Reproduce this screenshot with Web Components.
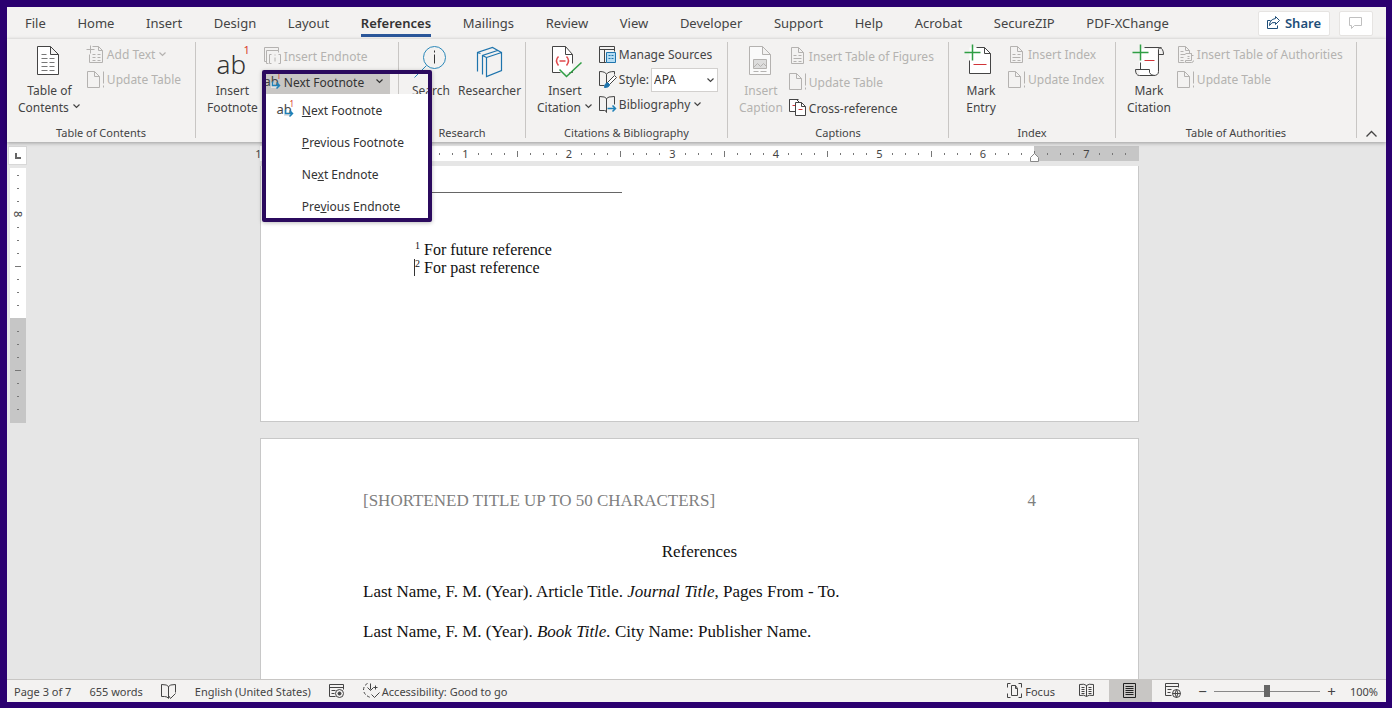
<!DOCTYPE html>
<html lang="en">
<head>
<meta charset="utf-8">
<meta name="viewport" content="width=device-width, initial-scale=1">
<title>Document - Word</title>
<style>
  body {
    margin: 0;
    background: #2b0070;
    color: #444;
    font: 12px/17px "Noto Sans", "Open Sans", sans-serif;
  }
</style>
</head>
<body>
<word-window>
  <tab-bar slot="tabs">
    <tab-link>File</tab-link>
    <tab-link>Home</tab-link>
    <tab-link>Insert</tab-link>
    <tab-link>Design</tab-link>
    <tab-link>Layout</tab-link>
    <tab-link active>References</tab-link>
    <tab-link>Mailings</tab-link>
    <tab-link>Review</tab-link>
    <tab-link>View</tab-link>
    <tab-link>Developer</tab-link>
    <tab-link>Support</tab-link>
    <tab-link>Help</tab-link>
    <tab-link>Acrobat</tab-link>
    <tab-link>SecureZIP</tab-link>
    <tab-link>PDF-XChange</tab-link>
  </tab-bar>

  <ribbon-bar slot="ribbon">
    <ribbon-group label="Table of Contents">
      <big-button icon="toc" menu>Table of<br>Contents</big-button>
      <command-list>
        <small-button icon="addText" disabled menu>Add Text</small-button>
        <small-button icon="update" disabled>Update Table</small-button>
      </command-list>
    </ribbon-group>
    <ribbon-group label="">
      <big-button icon="footnote">Insert<br>Footnote</big-button>
      <command-list roomy>
        <small-button icon="endnote" disabled>Insert Endnote</small-button>
        <footnote-menu>
          <menu-item icon="next"><u>N</u>ext Footnote</menu-item>
          <menu-item><u>P</u>revious Footnote</menu-item>
          <menu-item>Ne<u>x</u>t Endnote</menu-item>
          <menu-item>Pre<u>v</u>ious Endnote</menu-item>
        </footnote-menu>
      </command-list>
    </ribbon-group>
    <ribbon-group label="Research">
      <big-button icon="search">Search</big-button>
      <big-button icon="researcher">Researcher</big-button>
    </ribbon-group>
    <ribbon-group label="Citations &amp; Bibliography">
      <big-button icon="citation" menu>Insert<br>Citation</big-button>
      <command-list>
        <small-button icon="sources">Manage Sources</small-button>
        <style-picker></style-picker>
        <small-button icon="bibliography" menu>Bibliography</small-button>
      </command-list>
    </ribbon-group>
    <ribbon-group label="Captions">
      <big-button icon="caption" disabled>Insert<br>Caption</big-button>
      <command-list roomy>
        <small-button icon="lines" disabled>Insert Table of Figures</small-button>
        <small-button icon="update" disabled>Update Table</small-button>
        <small-button icon="crossRef">Cross-reference</small-button>
      </command-list>
    </ribbon-group>
    <ribbon-group label="Index">
      <big-button icon="markEntry">Mark<br>Entry</big-button>
      <command-list>
        <small-button icon="lines" disabled>Insert Index</small-button>
        <small-button icon="update" disabled>Update Index</small-button>
      </command-list>
    </ribbon-group>
    <ribbon-group label="Table of Authorities">
      <big-button icon="markCitation">Mark<br>Citation</big-button>
      <command-list>
        <small-button icon="authorities" disabled>Insert Table of Authorities</small-button>
        <small-button icon="update" disabled>Update Table</small-button>
      </command-list>
    </ribbon-group>
  </ribbon-bar>

  <doc-workspace slot="workspace">
    <footnote-page></footnote-page>
    <reference-page></reference-page>
  </doc-workspace>

  <status-bar slot="status"></status-bar>
</word-window>

<script>
const DOC = 'M1 1h13l8 8v20H1zM14 1v8h8';

// name: [width, height, svg markup]
const ICONS = {
  toc: [32, 32, `<g transform="translate(4 1)"><path fill="#fff" d="${DOC}"/><path d="M5 9h5M5 13h6M13 13h5M5 17h6M13 17h5M5 21h6M13 21h5M5 25h6M13 25h5" stroke="#777"/></g>`],
  addText: [18, 18, `<path d="M6 1h6l4 4v12H3v-8M12 1v4h4M0 4h8M4 0v8M6 9h3M11 9h3M6 12h3M11 12h3M6 15h3M11 15h3"/>`],
  update: [18, 18, `<path d="M1 1h7l5 5v11H1zM8 1v5h5M17 1v12M17 15v2"/>`],
  lines: [18, 18, `<path d="M3 1h7l5 5v11H3zM10 1v5h5M5 9h3M10 9h3M5 12h8M5 15h3M10 15h3"/>`],
  authorities: [18, 18, `<path d="M2 17V1h7l4 4v3M9 1v4h4M2 17h6M4 6h3M4 9h5M4 12h3M4 15h3M9 8h6v2h2M15 8v7H9v2h6q2 0 2-2M11 11h2M11 13h2"/>`],
  endnote: [18, 18, `<path d="M3 15H1V1h14v3M5 17H3V4h12v2M8 8H6v9h2M15 8h2v9h-2M11.500 11v4M11.500 8v1"/>`],
  footnote: [32, 32, `<text x="1" y="29" font-size="26" font-weight="300" fill="#333">ab</text><text x="28" y="9" font-size="11" fill="#d83b2b">1</text>`],
  next: [18, 18, `<text x="0" y="13" font-size="13" fill="#444">ab</text><text x="13" y="6" font-size="8" fill="#d83b2b">1</text><path stroke="#e4e3e2" stroke-width="3" d="M9 10v4h6"/><path stroke="#1e81b8" stroke-width="1.500" d="M9 9v4h7M13 10l3 3-3 3"/>`],
  search: [32, 32, `<g stroke="#2b88b9"><circle cx="20" cy="13" r="11"/><path d="M12 21L0 33"/></g><path d="M20 10v9M20 6v2" stroke="#333"/>`],
  researcher: [32, 32, `<path stroke="#1e74ad" stroke-width="1.200" d="M13 13l15-5v18l-15 6zM9 30V11l15-5M4 27V8l15-5 9 5M4 8l3 1M9 11l4 2"/>`],
  citation: [32, 32, `<path fill="#fff" stroke="none" d="M4 2h13l7 8v18H4z"/><path d="M12 28H4V2h13l7 8v9M17 2v8h7M24 26v2h-3"/><path stroke="#e0494c" stroke-width="1.500" d="M10 12q-4 4 0 9M18 12q4 4 0 9M11 16.500h6"/><path stroke="#2f9e44" stroke-width="1.500" d="M11 25l7 7L33 18"/>`],
  sources: [18, 18, `<path d="M8 17H1V1h15v5M1 4h15M6 4v13"/><path fill="#b5dcf3" stroke="#1e74ad" d="M8 7h9v10H8z"/><path stroke="#1e74ad" d="M10 10h2M13 10h2M10 13h2M13 13h2"/>`],
  style: [18, 18, `<path d="M8 4Q7 1 1 1v14h5M8 4Q9 1 16 1v3M8 4v9"/><path fill="#fff" d="M16 5l2 2-7 7-2-2z"/><path fill="#1e74ad" stroke="#1e74ad" d="M9 12q-3 1-3 5 5 0 5-3z"/>`],
  bibliography: [18, 18, `<path d="M8 3Q7 1 1 1v14h5q2 0 2 2M8 3Q9 1 16 1v8M8 3v14"/><path stroke="#1e81b8" stroke-width="1.500" d="M9 13h8M14 10l3 3-3 3"/>`],
  caption: [32, 32, `<g transform="translate(4 1)"><path fill="#fafafa" d="${DOC}"/><path fill="#ddd" d="M5 14h13v9H5zM5 22l4-4 3 3 3-3 3 3M5 26h5M12 26h6"/></g>`],
  crossRef: [18, 18, `<path fill="#fff" d="M7 13H1V1h7l3 3M10 1H1"/><path d="M4 7h3" stroke="#d13438"/><path fill="#fff" d="M7 4h6l4 4v9H7z"/><path d="M13 4v4h4"/><path stroke="#d13438" d="M10 11h4"/>`],
  markEntry: [32, 32, `<path fill="#fff" d="M5 16V3h15l6 6v20H5z" stroke="none"/><path d="M12 3h8l6 6v20H5V16M20 3v6h6"/><path stroke="#2f9e44" stroke-width="1.500" d="M0 8h16M8 0v16"/><path stroke="#d13438" d="M9 20h13"/>`],
  markCitation: [32, 32, `<path fill="#fff" stroke="none" d="M7 4h18v27H7z"/><path d="M12 3h15q4 1 4 7h-5V5q0-2 3-2M26 9v18q0 4-5 4H7q-4 0-4-6h14v3q1 3 5 3M8 18v7"/><path stroke="#2f9e44" stroke-width="1.500" d="M0 8h16M8 0v16"/><path stroke="#d13438" d="M12 16h10"/>`],
  share: [14, 14, `<path d="M4 5H1v8h10v-3M9 1l4 4-4 4V7Q5 6 3 10q0-6 6-7z"/>`],
  comment: [14, 14, `<path d="M1 2h12v8H6l-3 3v-3H1z"/>`],
  proof: [16, 16, `<path d="M8 4Q7 2 1 2v12h3q3 0 4 2M8 4Q9 2 15 2v8M8 4v12M8 13l2 3 5-5"/>`],
  macro: [16, 16, `<path d="M7 14H1V2h14v5M1 5h14M3 8h4M3 11h3"/><circle cx="11" cy="11" r="4"/><circle cx="11" cy="11" r="1.500" fill="currentColor"/>`],
  access: [17, 17, `<path d="M8 1v6M5 5l3 3 3-3M13 3v4M11 5h4M9 12l3 3 5-5"/><path stroke-dasharray="3 2" d="M5 1Q1 3 1 8q1 5 7 7"/>`],
  focus: [16, 16, `<path d="M4 1H1v4M12 1h3v4M4 15H1v-4M12 15h3v-4M5 3h4l2 3v7H5zM9 3v3h2"/>`],
  read: [16, 16, `<path d="M8 3Q6 1 1 2v11q5-1 7 1 2-2 7-1V2Q10 1 8 3v11M3 5h3M3 7h3M3 9h3M3 11h3M10 5h3M10 7h3M10 9h3M10 11h3"/>`],
  print: [14, 16, `<path d="M1 1h12v14H1zM3 4h8M3 6h8M3 8h8M3 10h8M3 12h8" stroke="#222"/>`],
  web: [17, 16, `<path d="M7 13H1V1h13v4M1 4h13M3 7h4M3 10h3"/><circle cx="12" cy="11" r="4"/><path d="M8 11h8M12 7q-3 4 0 8 3-4 0-8"/>`],
  chevron: [8, 6, `<path d="M1 1l3 3 3-3" stroke-width="1.200"/>`],
  collapse: [12, 8, `<path d="M1 7l5-5 5 5" stroke-width="1.300"/>`],
  indent: [10, 10, `<path fill="#fff" d="M1 9V5l4-4 4 4v4z" stroke="#888"/>`],
};

const icon = (name) => {
  const [w, h, body] = ICONS[name];
  return `<svg width="${w}" height="${h}" viewBox="0 0 ${w} ${h}" fill="none" stroke="currentColor" aria-hidden="true"><g transform="translate(-.5 -.5)">${body.replace(/<text/g, '<text stroke="none"')}</g></svg>`;
};

const RESET = `
  svg { flex: none; overflow: visible; }
  button { font: inherit; color: inherit; background: none; border: 0; padding: 0; margin: 0; }
`;

function define(name, render) {
  customElements.define(name, class extends HTMLElement {
    connectedCallback() {
      if (this.shadowRoot) return;
      this.attachShadow({ mode: 'open' }).innerHTML = `<style>${RESET}</style>` + render(this);
    }
  });
}

define('word-window', () => `
  <style>
    :host {
      display: flex;
      flex-direction: column;
      box-sizing: border-box;
      height: 100vh;
      padding: 7px 6px 6px 7px;
    }
    ::slotted([slot="workspace"]) { flex: 1; min-height: 0; }
  </style>
  <slot name="tabs"></slot>
  <slot name="ribbon"></slot>
  <slot name="workspace"></slot>
  <slot name="status"></slot>
`);

define('tab-bar', () => `
  <style>
    :host { display: flex; align-items: center; height: 32px; background: #f3f2f1; }
    nav { display: flex; flex: 1; justify-content: space-between; padding: 0 89px 0 18px; }
    .actions { display: flex; gap: 9px; padding-right: 13px; }
    button {
      display: flex;
      align-items: center;
      justify-content: center;
      gap: 4px;
      height: 25px;
      padding: 0 8px;
      background: #fff;
      border: 1px solid #e6e4e2;
      border-radius: 2px;
      color: #1f4e79;
      font-size: 13px;
      font-weight: 600;
    }
    .comment { padding: 0 9px; color: #c0c0c0; }
  </style>
  <nav><slot></slot></nav>
  <div class="actions">
    <button>${icon('share')}Share</button>
    <button class="comment" aria-label="Comments">${icon('comment')}</button>
  </div>
`);

define('tab-link', (el) => `
  <style>
    :host { display: block; font-size: 13px; line-height: 20px; }
    a {
      display: block;
      padding: 3px 0 1px;
      border-bottom: 3px solid transparent;
      color: #444;
      text-decoration: none;
      white-space: nowrap;
    }
    :host([active]) a { border-color: #2b579a; color: #333; font-weight: 600; }
  </style>
  <a href="#" ${el.hasAttribute('active') ? 'aria-current="page"' : ''}><slot></slot></a>
`);

define('ribbon-bar', () => `
  <style>
    :host {
      position: relative;
      z-index: 1;
      display: grid;
      grid-template-columns:
        minmax(0, 189fr) minmax(0, 203fr) minmax(0, 127fr) minmax(0, 202fr)
        minmax(0, 221fr) minmax(0, 167fr) minmax(0, 241fr) minmax(0, 29fr);
      height: 103px;
      background: #f3f2f1;
      box-shadow: 0 1px 4px #0005;
    }
    button { display: flex; justify-content: center; align-items: flex-end; padding-bottom: 4px; }
  </style>
  <slot></slot>
  <button aria-label="Collapse the ribbon">${icon('collapse')}</button>
`);

define('ribbon-group', (el) => `
  <style>
    :host {
      display: flex;
      flex-direction: column;
      box-sizing: border-box;
      margin: 3px 0 4px;
      border-right: 1px solid #c8c6c4;
    }
    .body { display: flex; flex: 1; gap: 6px; padding-left: 11px; }
    .label { font-size: 11px; line-height: 10px; text-align: center; }
  </style>
  <div class="body"><slot></slot></div>
  <div class="label">${el.getAttribute('label')}</div>
`);

define('big-button', (el) => `
  <style>
    :host { display: block; }
    button {
      display: flex;
      flex-direction: column;
      align-items: center;
      gap: 5px;
      min-width: 42px;
      padding-top: 3px;
      white-space: nowrap;
    }
    span svg { margin-left: 4px; vertical-align: 2px; }
    :host([disabled]) { color: #b4b2b0; }
  </style>
  <button ${el.hasAttribute('disabled') ? 'disabled' : ''}>
    ${icon(el.getAttribute('icon'))}
    <span><slot></slot>${el.hasAttribute('menu') ? icon('chevron') : ''}</span>
  </button>
`);

define('command-list', () => `
  <style>
    :host { display: grid; grid-auto-rows: 25px; align-content: start; }
    :host([roomy]) { grid-auto-rows: 26px; padding-top: 1px; }
  </style>
  <slot></slot>
`);

define('small-button', (el) => `
  <style>
    :host { display: flex; }
    button { display: flex; align-items: center; gap: 2px; white-space: nowrap; }
    .arrow { display: flex; margin-left: 2px; }
    :host([disabled]) { color: #b4b2b0; }
  </style>
  <button ${el.hasAttribute('disabled') ? 'disabled' : ''}>
    ${icon(el.getAttribute('icon'))}<slot></slot>
    ${el.hasAttribute('menu') ? `<span class="arrow">${icon('chevron')}</span>` : ''}
  </button>
`);

define('style-picker', () => `
  <style>
    :host { display: flex; align-items: center; gap: 2px; }
    .field { position: relative; display: flex; }
    select {
      appearance: none;
      width: 67px;
      height: 24px;
      padding: 0 2px;
      border: 1px solid #d2d0ce;
      border-radius: 0;
      background: #fff;
      color: #333;
      font: inherit;
    }
    .field svg { position: absolute; right: 3px; top: 10px; pointer-events: none; }
  </style>
  ${icon('style')}<label for="style">Style:</label>
  <span class="field">
    <select id="style"><option>APA</option></select>
    ${icon('chevron')}
  </span>
`);

// split button shown with its menu open
define('footnote-menu', () => `
  <style>
    :host { position: relative; display: block; color: #333; }
    .current {
      display: flex;
      align-items: center;
      gap: 2px;
      box-sizing: border-box;
      width: 126px;
      height: 24px;
      margin-top: 1px;
      background: #c8c6c4;
      white-space: nowrap;
    }
    .current > :last-child { margin-left: auto; margin-right: 6px; }
    .popup {
      position: absolute;
      top: 1px;
      left: -2px;
      padding-top: 20px;
      border: 4px solid #2b0a5e;
      border-radius: 2px;
      box-shadow: 0 1px 4px #0004;
      pointer-events: none;
    }
    .menu {
      display: grid;
      grid-auto-rows: 20px;
      gap: 12px;
      min-width: 162px;
      padding-top: 7px;
      padding-bottom: 1px;
      background: #fff;
      pointer-events: auto;
    }
  </style>
  <button class="current" aria-expanded="true">${icon('next')}<span>Next Footnote</span>${icon('chevron')}</button>
  <div class="popup"><div class="menu" role="menu"><slot></slot></div></div>
`);

define('menu-item', (el) => `
  <style>
    :host { display: block; }
    button { display: grid; grid-template-columns: 18px 1fr; gap: 7px; padding-left: 11px; line-height: 20px; text-align: left; white-space: nowrap; }
  </style>
  <button role="menuitem"><span>${el.hasAttribute('icon') ? icon(el.getAttribute('icon')) : ''}</span><span><slot></slot></span></button>
`);

// one cell per eighth of an inch, numbered on the inch
function ticks(from, to, label) {
  let out = '';
  for (let i = from; i <= to; i++) {
    const text = label(i);
    out += text !== undefined ? `<b>${text}</b>` : i % 4 === 0 ? '<i class="half"></i>' : '<i></i>';
  }
  return out;
}

define('page-ruler', () => `
  <style>
    :host {
      position: relative;
      display: block;
      height: 15px;
      background: linear-gradient(to right, #fff 88%, #c6c6c6 88%);
    }
    .ticks { display: flex; height: 100%; margin: 0 7px 0 -8px; }
    .ticks > * { display: flex; flex: 1 1 0; align-items: center; justify-content: center; width: 0; }
    b { font-size: 11px; font-weight: 400; }
    i::before { content: ""; width: 1px; height: 2px; background: #777; }
    .half::before { height: 6px; }
    .indent { position: absolute; left: 88%; top: 7px; display: flex; margin-left: -4px; }
  </style>
  <div class="ticks">${ticks(-8, 59, (i) => (i % 8 === 0 ? (i === 0 ? '' : Math.abs(i / 8)) : undefined))}</div>
  <span class="indent">${icon('indent')}</span>
`);

define('side-ruler', () => `
  <style>
    :host {
      display: flex;
      flex-direction: column;
      box-sizing: border-box;
      width: 16px;
      height: 255px;
      padding: 1px 0 7px;
      background: linear-gradient(#fff 150px, #c6c6c6 150px);
    }
    b, i { display: flex; flex: 1 1 0; align-items: center; justify-content: center; height: 0; }
    b { font-size: 11px; font-weight: 400; writing-mode: vertical-rl; }
    i::before { content: ""; width: 2px; height: 1px; background: #777; }
    .half::before { width: 6px; }
  </style>
  ${ticks(-3, 15, (i) => (i === 0 ? '8' : i === 8 ? '' : undefined))}
`);

define('doc-workspace', () => `
  <style>
    :host {
      display: grid;
      grid-template-columns: 20px minmax(0, 233fr) minmax(0, 879fr) minmax(0, 247fr);
      grid-template-rows: 15px minmax(0, 1fr);
      row-gap: 5px;
      padding-top: 4px;
      background: #e6e6e6;
      overflow: hidden;
    }
    .corner {
      width: 19px;
      height: 19px;
      margin-left: 1px;
      border: 1px solid #d8d8d8;
      background: #fff;
      box-sizing: border-box;
      display: flex;
      align-items: center;
      justify-content: center;
    }
    .corner::before { content: ""; width: 4px; height: 4px; border: solid #666; border-width: 0 0 2px 2px; }
    page-ruler { grid-area: 1 / 3; }
    side-ruler { grid-area: 2 / 1; margin: 2px 0 0 3px; }
    .pages { grid-area: 2 / 3; display: flex; flex-direction: column; gap: 16px; overflow: hidden; }
  </style>
  <div class="corner"></div>
  <page-ruler></page-ruler>
  <side-ruler></side-ruler>
  <div class="pages"><slot></slot></div>
`);

const PAPER = `
  :host {
    display: block;
    flex: none;
    box-sizing: border-box;
    padding: 0 102px;
    background: #fff;
    border: 1px solid #c8c8c8;
    color: #111;
    font-family: "Liberation Serif", serif;
  }
  p { margin: 0; }
`;

define('footnote-page', () => `
  <style>
    ${PAPER}
    :host { border-top: 0; padding-top: 26px; padding-bottom: 144px; font-size: 16px; line-height: 18px; }
    hr { width: 259px; height: 1px; margin: 0 0 48px; border: 0; background: #666; }
    p { padding-left: 52px; }
    sup { font-size: 10px; line-height: 10px; vertical-align: 6px; }
    .caret { border-left: 1px solid #333; margin-left: -1px; }
  </style>
  <hr>
  <p><sup>1</sup> For future reference</p>
  <p><span class="caret"></span><sup>2</sup> For past reference</p>
`);

define('reference-page', () => `
  <style>
    ${PAPER}
    :host { padding-top: 42px; padding-bottom: 80px; font-size: 17px; line-height: 40px; }
    header { display: flex; justify-content: space-between; color: #808080; margin-bottom: 11px; }
    h1 { margin: 0; font: inherit; text-align: center; }
  </style>
  <header><span>[SHORTENED TITLE UP TO 50 CHARACTERS]</span><span>4</span></header>
  <h1>References</h1>
  <p>Last Name, F. M. (Year). Article Title. <em>Journal Title</em>, Pages From - To.</p>
  <p>Last Name, F. M. (Year). <em>Book Title.</em> City Name: Publisher Name.</p>
`);

define('status-bar', () => `
  <style>
    :host {
      display: flex;
      align-items: stretch;
      justify-content: space-between;
      box-sizing: border-box;
      height: 23px;
      background: #f3f2f1;
      border-top: 1px solid #c8c6c4;
      font-size: 11px;
    }
    div { display: flex; align-items: center; }
    .info { gap: 18px; padding-left: 7px; }
    .view { padding-right: 8px; }
    button { display: flex; align-items: center; gap: 2px; white-space: nowrap; }
    .focus { margin-right: 11px; }
    .mode { justify-content: center; align-self: stretch; width: 43px; }
    .on { background: #c8c6c4; }
    .zoom { width: 15px; justify-content: center; font-size: 15px; }
    input { appearance: none; width: 106px; height: 16px; margin: 0 4px; background: none; }
    input::-webkit-slider-runnable-track { height: 1px; background: #888; }
    input::-webkit-slider-thumb { appearance: none; width: 6px; height: 12px; margin-top: -6px; background: #666; }
    .percent { margin-left: 11px; }
  </style>
  <div class="info">
    <button>Page 3 of 7</button>
    <button>655 words</button>
    <button aria-label="Proofing">${icon('proof')}</button>
    <button>English (United States)</button>
    <button aria-label="Record macro">${icon('macro')}</button>
    <button>${icon('access')}Accessibility: Good to go</button>
  </div>
  <div class="view">
    <button class="focus">${icon('focus')}Focus</button>
    <button class="mode" aria-label="Read mode">${icon('read')}</button>
    <button class="mode on" aria-label="Print layout">${icon('print')}</button>
    <button class="mode" aria-label="Web layout">${icon('web')}</button>
    <button class="zoom" aria-label="Zoom out">−</button>
    <input type="range" min="0" max="100" value="50" aria-label="Zoom">
    <button class="zoom" aria-label="Zoom in">+</button>
    <button class="percent">100%</button>
  </div>
`);
</script>
</body>
</html>
